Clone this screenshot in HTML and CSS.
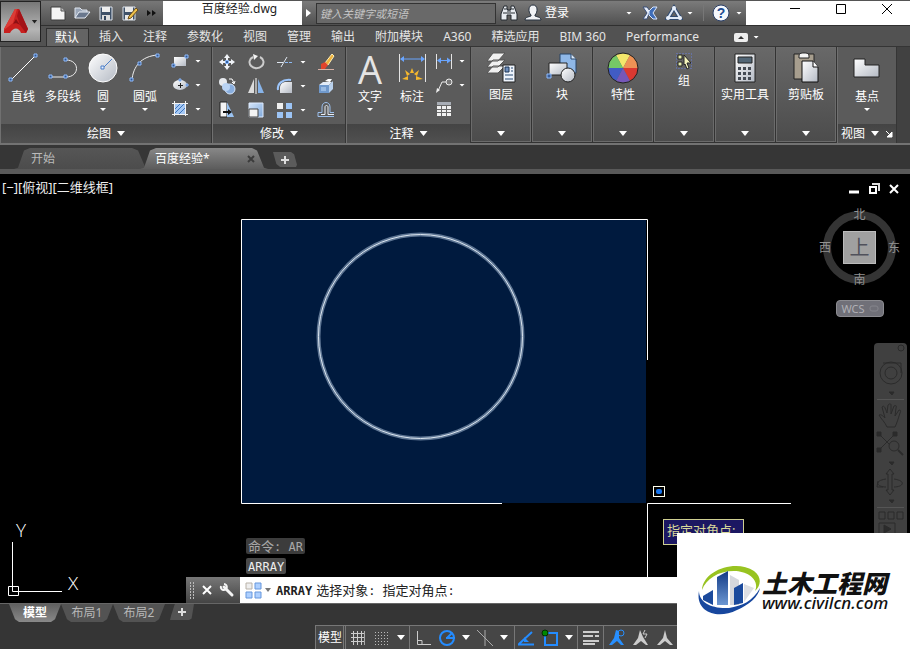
FILE: index.html
```html
<!DOCTYPE html>
<html lang="zh-CN">
<head>
<meta charset="utf-8">
<title>百度经验.dwg</title>
<link rel="stylesheet" href="styles.css">
</head>
<body>
<div class="app">
  <svg class="defs" aria-hidden="true">
    <defs>
      <linearGradient id="metal" x1="0" y1="0" x2="1" y2="1"><stop offset="0" stop-color="#fff"/><stop offset="1" stop-color="#b4bac4"/></linearGradient>
      <linearGradient id="blue" x1="0" y1="0" x2="1" y2="1"><stop offset="0" stop-color="#d5e6fa"/><stop offset="1" stop-color="#7fa8da"/></linearGradient>
      <linearGradient id="tower" x1="0" y1="0" x2="0" y2="1"><stop offset="0" stop-color="#123a86"/><stop offset="1" stop-color="#6c97d2"/></linearGradient>
    </defs>
  </svg>

  <header class="top">
    <button class="app-button" aria-label="应用程序菜单">
      <svg width="24" height="25" viewBox="0 0 24 25"><path d="M11 0h4l9 20-2 4h-5c-2-6-8-6-11 0H0v-4z" fill="#c8201f"/><path d="M11 0h2l-4 14-9 7v-1z" fill="#dc3b36"/><path d="M15 0l9 20-2 4-6-8-3-9z" fill="#a31217"/><path d="M9 15l3-5 4 6c-3-2-5-2-7-1z" fill="#8d0f14"/></svg>
      <i class="caret"></i>
    </button>
    <div class="top-rows">
      <div class="title-bar">
        <div class="quick">
          <button aria-label="新建"><svg width="18" height="18"><path d="M2 3h10l4 4v9H2z" fill="#f4f4f4" stroke="#3c3c3c"/><path d="M12 3v4h4" fill="#bbb" stroke="#555"/></svg></button>
          <button aria-label="打开"><svg width="18" height="18"><path d="M2 14V4h5l2 2h5v3" fill="#9aa6b8" stroke="#dfe5ee"/><path d="M2 14l4-6h11l-5 6z" fill="#69778d" stroke="#e8edf4"/></svg></button>
          <button aria-label="保存"><svg width="18" height="18"><path d="M3 3h12v13H3z" fill="#3f5168" stroke="#dce3ec"/><path d="M5 3h8v5H5z" fill="#eee"/><path d="M5 11h8v5H5z" fill="#ddd"/><path d="M7 12h2v4H7z" fill="#34465e"/></svg></button>
          <button aria-label="另存为"><svg width="18" height="18"><path d="M2 3h12v13H2z" fill="#3f5168" stroke="#dce3ec"/><path d="M4 3h8v5H4zM4 11h8v5H4z" fill="#e8e8e8"/><path d="M8 12l7-8 2 2-7 8-3 1z" fill="#efc24b" stroke="#6d4e1b"/></svg></button>
          <button aria-label="更多"><svg width="18" height="18"><path d="M2 6l4 3-4 3zM7 6l4 3-4 3z" fill="#111"/></svg></button>
        </div>
        <div class="doc-title">百度经验.dwg</div>
        <div class="info">
          <button class="info-toggle" aria-label="展开"><svg width="6" height="10"><path d="M0 1l5 4-5 4z" fill="#fff"/></svg></button>
          <input class="search" type="text" aria-label="搜索" placeholder="键入关键字或短语">
          <button aria-label="查找"><svg width="18" height="18"><path d="M4 2h3v3l1 1h2l1-1V2h3l3 8v6h-6v-5H7v5H1v-6z" fill="#e9edf2" stroke="#252a31"/><path d="M3 9h4M11 9h4M8 6v4M10 6v4M4 5h3M11 5h3" stroke="#252a31"/></svg></button>
          <button class="login"><svg width="18" height="18"><path d="M1 16c0-3 4-3 6-4v-1C4 8 4 1 9 1s5 7 2 10v1c2 1 6 1 6 4z" fill="#f0f2f5" stroke="#25303e"/></svg>登录</button>
          <i class="caret light push"></i>
          <button aria-label="Exchange"><svg width="18" height="18"><path d="M2 3h4l3 4-3 8H2l4-6z" fill="#e7eefb" stroke="#3b4f77"/><path d="M16 3h-4L8 7v4l4 4h4l-4-6z" fill="#3f6db8" stroke="#dbe7fb"/></svg></button>
          <button class="a360" aria-label="A360"><svg width="18" height="18"><path d="M9 4l6 10H3z" fill="none" stroke="#304a70" stroke-width="4"/><path d="M9 4l6 10H3z" fill="none" stroke="#dde8f7" stroke-width="2"/><circle cx="9" cy="4" r="2" fill="#e8f0fc"/><circle cx="3" cy="14" r="2" fill="#e8f0fc"/><circle cx="15" cy="14" r="2" fill="#e8f0fc"/></svg></button>
          <i class="caret light"></i>
          <span class="divider"></span>
          <button aria-label="帮助"><svg width="18" height="18"><circle cx="9" cy="9" r="8" fill="#f4f7fc" stroke="#2b3f66"/><text class="help-mark" x="9" y="14" text-anchor="middle">?</text></svg></button>
          <i class="caret light"></i>
        </div>
        <div class="window-controls">
          <button aria-label="最小化"><svg width="12" height="12"><path d="M1 5.500h10" stroke="#000"/></svg></button>
          <button aria-label="最大化"><svg width="12" height="12"><path d="M1.500 1.500h9v9h-9z" fill="none" stroke="#000"/></svg></button>
          <button aria-label="关闭"><svg width="12" height="12"><path d="M1 1l10 10M11 1L1 11" stroke="#000"/></svg></button>
        </div>
      </div>
      <nav class="ribbon-tabs">
        <button class="active">默认</button><button>插入</button><button>注释</button><button>参数化</button><button>视图</button><button>管理</button><button>输出</button><button>附加模块</button><button>A360</button><button>精选应用</button><button>BIM 360</button><button>Performance</button>
        <button class="minimize" aria-label="最小化功能区"><svg width="14" height="9"><rect width="14" height="9" rx="2" fill="#eee"/><path d="M4 6l3-3 3 3z" fill="#333"/></svg><i class="caret light"></i></button>
      </nav>
    </div>
  </header>

  <section class="ribbon">
    <div class="panel draw">
      <div class="tools">
        <button class="big"><svg width="32" height="32"><path d="M3.500 28.500l25-25" stroke="#fff"/><path d="M2 26h3v3H2zM27 2h3v3h-3z" fill="#31578f" stroke="#8fbcff"/></svg>直线</button>
        <button class="big"><svg width="32" height="32"><path d="M3 25h16c14 0 14-17 0-17" fill="none" stroke="#eee"/><path d="M2 23h3v3H2zM17 23h3v3h-3zM17 6h3v3h-3z" fill="#31578f" stroke="#8fbcff"/></svg>多段线</button>
        <button class="big"><svg width="32" height="32"><circle cx="16" cy="16" r="14" fill="url(#metal)" stroke="#fff"/><path d="M16 16l9-9" stroke="#4d7fc8"/><path d="M14 14h3v3h-3z" fill="#e8f2ff" stroke="#4d7fc8"/></svg>圆<i class="caret light"></i></button>
        <button class="big arc"><svg width="32" height="32"><path d="M3 28C4 15 12 4 29 3" fill="none" stroke="#eee"/><path d="M1 26h3v3H1zM9 10h3v3H9zM27 2h3v3h-3z" fill="#31578f" stroke="#8fbcff"/></svg>圆弧<i class="caret light"></i></button>
        <div class="rows">
          <button aria-label="矩形"><svg width="18" height="18"><path d="M3 5h12v9H3z" fill="url(#metal)"/><path d="M1 12h3v3H1zM14 3h3v3h-3z" fill="#31578f" stroke="#8fbcff"/></svg><i class="caret light"></i></button>
          <button aria-label="椭圆"><svg width="18" height="18"><ellipse cx="9" cy="9" rx="7" ry="5" fill="url(#metal)"/><path d="M7 9.500h5M9.500 7v5" stroke="#222"/><path d="M8 3h2v2H8zM15 8h2v2h-2z" fill="#31578f" stroke="#8fbcff"/></svg><i class="caret light"></i></button>
          <button aria-label="图案填充"><svg width="18" height="18"><path d="M4 4h10v10H4z" fill="#a6c8f3"/><path d="M4 9l5-5M4 13l9-9M8 14l6-6" stroke="#3973bd"/><path d="M3.500 1v15M14.500 1v15M1 3.500h16M1 14.500h16" stroke="#f2f2f2"/></svg><i class="caret light"></i></button>
        </div>
      </div>
      <button class="panel-title">绘图<i class="caret wide"></i></button>
    </div>

    <div class="panel modify">
      <div class="tool-grid">
        <button aria-label="移动"><svg width="18" height="18"><path d="M9 1l3 4h-2v3h3V6l4 3-4 3v-2h-3v3h2l-3 4-3-4h2v-3H5v2L1 9l4-3v2h3V5H6z" fill="#f0f3f7"/><path d="M7.500 7.500h3v3h-3z" fill="#35609c" stroke="#8fbcff"/></svg></button>
        <button aria-label="旋转"><svg width="18" height="18"><path d="M6 4a7 6 0 1 0 7 0" fill="none" stroke="#ccc" stroke-width="2"/><path d="M6 1l5 2-4 4z" fill="#f4f4f4"/></svg></button>
        <button aria-label="修剪"><svg width="18" height="18"><path d="M1 9.500h6M5 14l6-10" stroke="#dfe6ef"/><path d="M9 9.500h8" stroke="#8cb9f3" stroke-dasharray="3 1"/></svg><i class="caret light"></i></button>
        <button aria-label="删除"><svg width="18" height="18"><path d="M8 10l7-9 2 2-6 9z" fill="#efb13a" stroke="#fff1b8"/><path d="M4 11l4-2 3 3-3 4H4z" fill="#e2442c"/><path d="M1 16.500h16" stroke="#d7b0a5"/></svg></button>
        <button aria-label="复制"><svg width="18" height="18"><circle cx="5" cy="5" r="4" fill="#e6e9ee"/><circle cx="12" cy="12" r="5" fill="#88aedf" stroke="#d7e6fa"/><circle cx="8" cy="10" r="4" fill="#b9d3f4"/><path d="M11 2h3l2 4M14 5l2 2 1-3" fill="none" stroke="#fff"/></svg></button>
        <button aria-label="镜像"><svg width="18" height="18"><path d="M7 2v14H1z" fill="#ddd"/><path d="M11 2v14h6z" fill="#88b4e9"/><path d="M9 1v16" stroke="#fff"/></svg></button>
        <button aria-label="圆角"><svg width="18" height="18"><path d="M4 16v-5c0-4 3-6 6-6h6v11z" fill="url(#metal)"/><path d="M2 13C1 7 6 2 15 3" fill="none" stroke="#9cc5fb" stroke-width="2"/></svg><i class="caret light"></i></button>
        <button aria-label="分解"><svg width="18" height="18"><path d="M2 8l4-3h9l-3 3z" fill="#e2ecf8"/><path d="M2 8h10v8H2z" fill="#7099cc"/><path d="M12 8l4-4v8l-4 4z" fill="#b8d0ec"/><path d="M8 4l3-2h4l-2 3z" fill="#fff"/><path d="M4 10h5v4H4z" fill="#99bbe3"/></svg></button>
        <button aria-label="拉伸"><svg width="18" height="18"><path d="M2 1h7v15H2z" fill="#f4f4f4" stroke="#222"/><path d="M9 1l7 15H9z" fill="#9bc3f1"/><path d="M5 11h7" stroke="#111" stroke-width="2"/><path d="M10 8l4 3-4 3z" fill="#111"/></svg></button>
        <button aria-label="缩放"><svg width="18" height="18"><path d="M2 2h14v14H2z" fill="url(#blue)" stroke="#dfecff"/><path d="M2 8h9v8H2z" fill="#f4f4f4" stroke="#444"/></svg></button>
        <button aria-label="阵列"><svg width="18" height="18"><path d="M1 2h6v6H1z" fill="#eee"/><path d="M10 2h6v6h-6zM1 11h6v6H1zM10 11h6v6h-6z" fill="#9cc4f5"/></svg><i class="caret light"></i></button>
        <button aria-label="偏移"><svg width="18" height="18"><path d="M1 15.500v-4h4V6c0-6 8-6 8 0v5.500h4M1 15.500h16" fill="none" stroke="#9cbfec"/><path d="M4 13.500h4V6c0-2 3-2 3 0v7.500h6" fill="none" stroke="#e8edf4"/></svg></button>
      </div>
      <button class="panel-title">修改<i class="caret wide"></i></button>
    </div>

    <div class="panel annotate">
      <div class="tools">
        <button class="big"><span class="letter">A</span>文字<i class="caret light"></i></button>
        <button class="big"><svg width="32" height="32"><path d="M3.500 2v28M29.500 2v28" stroke="#e4e4e4"/><path d="M5 7h23" stroke="#69a5ff"/><path d="M4 7l4-3v6zM29 7l-4-3v6z" fill="#69a5ff"/><path d="M16 16l2 5h-4zM9 18l5 4-3 2zM23 18l-5 4 3 2zM6 27l6-3v4zM27 27l-7-3v4z" fill="#f6b82c"/></svg>标注</button>
        <div class="rows">
          <button aria-label="线性"><svg width="18" height="18"><path d="M1.500 2v15M16.500 2v15" stroke="#e4e4e4"/><path d="M3 8.500h12" stroke="#69a5ff"/><path d="M2 8.500l4-3v6zM16 8.500l-4-3v6z" fill="#69a5ff"/></svg><i class="caret light"></i></button>
          <button aria-label="引线"><svg width="18" height="18"><path d="M3 15l4-9h5" fill="none" stroke="#eee"/><circle cx="14" cy="6" r="3" fill="#777" stroke="#eee"/><path d="M1 17l1-5 3 2z" fill="#eee"/></svg><i class="caret light"></i></button>
          <button aria-label="表格"><svg width="18" height="18"><path d="M2 2h14v14H2z" fill="#f0f0f0"/><path d="M2 2h14v3H2z" fill="#a8adb5"/><path d="M2 5.500h14M2 9.500h14M2 12.500h14M6.500 5v11M11.500 5v11" stroke="#666"/></svg></button>
        </div>
      </div>
      <button class="panel-title">注释<i class="caret wide"></i></button>
    </div>

    <button class="card"><svg width="32" height="32"><path d="M8 1h12l-7 8H2zM8 8h12l-7 7H2zM8 14h12l-7 7H2z" fill="#f1f1f1" stroke="#555"/><path d="M18 13h12v17H18z" fill="#eef4fc" stroke="#222"/><path d="M20 15h4v5h-4z" fill="#6e8fbd" stroke="#1d3454"/><path d="M26 16h2M26 19h2M20 23h8M20 27h8" stroke="#25466f"/></svg>图层<i class="caret wide"></i></button>
    <button class="card"><svg width="32" height="32"><path d="M14 2h11l5 5v14H14z" fill="#8fb8e8" stroke="#284467"/><path d="M25 2v5h5" fill="#dce9f8" stroke="#284467"/><path d="M3 11h18v12H3z" fill="url(#metal)" stroke="#222"/><circle cx="22" cy="23" r="7" fill="url(#metal)" stroke="#222"/><path d="M1 22h4v4H1z" fill="#395d97" stroke="#8fbcff"/></svg>块<i class="caret wide"></i></button>
    <button class="card"><svg width="32" height="32"><g transform="translate(16 16)"><path d="M0 0L-7-13A15 15 0 0 1 7-13z" fill="#f4e76b"/><path d="M0 0L7-13A15 15 0 0 1 15 0z" fill="#ee9255"/><path d="M0 0H15A15 15 0 0 1 7 13z" fill="#db3931"/><path d="M0 0L7 13A15 15 0 0 1-7 13z" fill="#7657b9"/><path d="M0 0L-7 13A15 15 0 0 1-15 0z" fill="#415cc4"/><path d="M0 0H-15A15 15 0 0 1-7-13z" fill="#75c866"/><circle r="15" fill="none" stroke="#222"/></g></svg>特性<i class="caret wide"></i></button>
    <button class="card"><svg width="18" height="18"><path d="M1.500 1.500h15v15h-15z" fill="none" stroke="#667fdd" stroke-dasharray="1 2"/><path d="M3 3h4v4H3zM3 10h4v4H3z" fill="#e5edaa" stroke="#222"/><path d="M9 3l7 8h-4l2 5-2 1-2-5-1 1z" fill="#f5f5bc" stroke="#222"/></svg>组<i class="caret wide"></i></button>
    <button class="card"><svg width="32" height="32"><path d="M6 2h20v28H6z" fill="url(#metal)" stroke="#222"/><path d="M9 5h14v6H9z" fill="#526676" stroke="#222"/><path d="M9 15h3v3H9zM14 15h3v3h-3zM19 15h3v3h-3zM9 20h3v3H9zM14 20h3v3h-3zM19 20h3v3h-3zM9 25h3v3H9zM14 25h3v3h-3zM19 25h3v3h-3z" fill="#454b54"/></svg>实用工具<i class="caret wide"></i></button>
    <button class="card"><svg width="32" height="32"><path d="M4 2h20v25H4z" fill="#a79e8e" stroke="#222"/><path d="M9 4c0-3 3-3 5-3s5 0 5 3v2H9z" fill="#f5f5f5" stroke="#222"/><path d="M12 9h11l5 6v15H12z" fill="url(#metal)" stroke="#111"/><path d="M23 9v6h5" fill="#fff" stroke="#111"/></svg>剪贴板<i class="caret wide"></i></button>

    <div class="panel view">
      <div class="tools">
        <button class="big"><svg width="32" height="32"><path d="M3 7h11v6h14v12H3z" fill="url(#metal)" stroke="#222"/></svg>基点<i class="caret light"></i></button>
      </div>
      <button class="panel-title">视图<i class="caret wide"></i><svg width="8" height="8"><path d="M1 1l4 4M7 2v5H2z" fill="#fff" stroke="#fff"/></svg></button>
    </div>
    <div class="ribbon-rest"></div>
  </section>

  <nav class="file-tabs">
    <button class="file-tab">开始</button>
    <button class="file-tab active">百度经验*<svg width="8" height="8"><path d="M1 1l6 6M7 1L1 7" stroke="#3c3c3c" stroke-width="2"/></svg></button>
    <button class="add-tab" aria-label="新图形"><svg width="10" height="10"><path d="M5 1v8M1 5h8" stroke="#ddd" stroke-width="2"/></svg></button>
  </nav>

  <main class="canvas">
    <svg class="drawing" width="860" height="429">
      <rect x="242" y="46" width="404" height="283" fill="#001a3e"/>
      <path d="M502 329.500H241.500V45.500H647.500V186" fill="none" stroke="#fff"/>
      <circle cx="420.500" cy="162.500" r="102" fill="none" stroke="#5d7593" stroke-width="4"/>
      <circle cx="420.500" cy="162.500" r="102" fill="none" stroke="#dce6f0"/>
      <path d="M647.500 403v-73.500H791" fill="none" stroke="#fff"/>
      <rect x="653.500" y="312.500" width="11" height="10" fill="#000" stroke="#ffe"/><rect x="656" y="315" width="6" height="5" rx="2" fill="#1674ee"/>
      <path d="M12.500 368v49.500H62M8.500 412.500h10v9h-10z" fill="none" stroke="#fff"/>
      <text class="axis" x="21" y="363" text-anchor="middle">Y</text>
      <text class="axis" x="73" y="416" text-anchor="middle">X</text>
    </svg>
    <div class="viewport-label">[−][俯视][二维线框]</div>
    <div class="doc-controls">
      <button aria-label="最小化图形"><svg width="12" height="12"><path d="M1 9h10" stroke="#fff" stroke-width="3"/></svg></button>
      <button aria-label="还原图形"><svg width="12" height="12"><path d="M4 1h7v7" fill="none" stroke="#ddd" stroke-width="2"/><path d="M2 4h6v6H2z" fill="none" stroke="#fff" stroke-width="2"/></svg></button>
      <button aria-label="关闭图形"><svg width="12" height="12"><path d="M2 2l8 8M10 2l-8 8" stroke="#fff" stroke-width="2"/></svg></button>
    </div>
    <div class="compass">
      <span class="north">北</span><span class="west">西</span><button class="face">上</button><span class="east">东</span><span class="south">南</span>
    </div>
    <button class="wcs">WCS<svg width="10" height="8"><rect x="1" y="1" width="8" height="5" rx="2" fill="none" stroke="#85858c"/></svg></button>
    <div class="nav-bar">
      <svg width="33" height="190" fill="none" stroke="#2b2b2b">
        <circle cx="27" cy="5" r="3"/><circle cx="17" cy="30" r="11"/><circle cx="17" cy="30" r="6"/><path d="M9 20h18v10"/>
        <path d="M15 49h5l-2 3zM15 119h5l-2 3zM15 157h5l-2 3z" fill="#2b2b2b"/>
        <path d="M3 56.500h27M3 164.500h27" stroke="#555"/>
        <path d="M13 84c-2-5-6-8-8-12 2-1 4 1 6 3L8 64c2-2 3 0 5 6l1-8c2-2 3-1 3 0v9l3-8c2-1 3 0 2 2l-1 8 4-6c2 0 2 1 1 3-2 6-3 10-5 14z"/>
        <path d="M5 91l14 14M21 91L5 107"/><path d="M3 89h4v4H3zM19 89h4v4h-4zM3 105h4v4H3z" fill="#2b2b2b"/><circle cx="20" cy="103" r="5" fill="#404040"/><path d="M24 107l5 5" stroke-width="2"/>
        <path d="M14 131h-2l4-5 4 5h-2v16h2l-4 5-4-5h2z"/><path d="M12 136c-13 2-9 8 0 8M20 136c13 2 9 8 0 8M4 138l-1 6h6"/>
        <path d="M5 169h6v7H5zM14 169h6v7h-6zM23 169h6v7h-6zM5 180h16v12H5z"/><path d="M10 182l7 4-7 4z" fill="#2b2b2b"/>
      </svg>
    </div>
    <div class="prompt-tip">指定对角点:</div>
    <div class="history"><span>命令<code>: AR</code></span><span><code>ARRAY</code></span></div>
    <div class="command">
      <div class="command-tools">
        <svg width="6" height="18"><path d="M1.500 1v17M4.500 1v17" stroke="#bbb" stroke-dasharray="2 1"/></svg>
        <button aria-label="关闭命令行"><svg width="12" height="12"><path d="M2 2l8 8M10 2l-8 8" stroke="#fff" stroke-width="2"/></svg></button>
        <button aria-label="自定义"><svg width="16" height="16"><path d="M5 5l8 8" stroke="#f4f4f4" stroke-width="3" stroke-linecap="round"/><path d="M2 4a3 3 0 1 0 3-2" fill="none" stroke="#f4f4f4" stroke-width="2"/></svg></button>
      </div>
      <svg class="array-icon" width="17" height="17"><path d="M1 1h6v6H1z" fill="#eee" stroke="#b9b2a8"/><path d="M10 1h6v6h-6zM1 10h6v6H1zM10 10h6v6h-6z" fill="#aed0ff" stroke="#6797dc"/></svg>
      <i class="caret gray"></i>
      <label class="command-text" for="cmd"><code class="strong">ARRAY</code>选择对象<code>: </code>指定对角点<code>:</code></label>
      <input id="cmd" class="command-input" type="text">
    </div>
  </main>

  <footer class="bottom">
    <nav class="layout-tabs">
      <button class="active">模型</button><button>布局1</button><button>布局2</button><button class="plus" aria-label="新建布局"><svg width="10" height="10"><path d="M5 1v8M1 5h8" stroke="#ddd" stroke-width="2"/></svg></button>
    </nav>
    <div class="status">
      <div class="status-group"><button>模型</button></div>
      <div class="status-group grid-tools"><button aria-label="栅格"><svg width="18" height="18"><path d="M4.500 2v14M8.500 2v14M12.500 2v14M2 4.500h14M2 8.500h14M2 12.500h14" stroke="#ccc"/><path d="M15.500 2v14" stroke="#aaa"/></svg></button><button aria-label="捕捉"><svg width="18" height="18"><path d="M2 3.500h14M2 6.500h14M2 9.500h14M2 12.500h14M2 15.500h14" stroke="#bbb" stroke-dasharray="1 2"/></svg></button><i class="caret wide"></i></div>
      <div class="status-group angle-tools"><button aria-label="正交"><svg width="18" height="18"><path d="M3.500 2v13.500H17M3 11.500h5v4" fill="none" stroke="#ccc"/></svg></button><button aria-label="极轴"><svg width="18" height="18"><circle cx="9" cy="9" r="7" fill="none" stroke="#248cff" stroke-width="2"/><path d="M8 9h9M9 9l5-5" stroke="#248cff" stroke-width="2"/></svg></button><i class="caret wide"></i><button aria-label="等轴测"><svg width="18" height="18"><path d="M1 1l16 16M9 1v16" stroke="#aaa"/></svg></button><i class="caret wide"></i></div>
      <div class="status-group snap-tools"><button aria-label="对象追踪"><svg width="18" height="18"><path d="M1 15.500h16M2 15L15 3" stroke="#248cff" stroke-width="2"/><path d="M7 8v5h5z" fill="#248cff"/></svg></button><button aria-label="对象捕捉"><svg width="18" height="18"><path d="M4 4h12v12H4z" fill="none" stroke="#248cff" stroke-width="2"/><circle cx="4" cy="4" r="3" fill="#008800" stroke="#002c00"/></svg></button><i class="caret wide"></i></div>
      <div class="status-group"><button aria-label="线宽"><svg width="18" height="18"><path d="M1 3h16M1 7h10M13 7h4M1 12h16M1 15h12" stroke="#ccc" stroke-width="2"/></svg></button></div>
      <div class="status-group">
        <button aria-label="注释可见性"><svg width="18" height="18"><path d="M8 1l3 1v7l5 7h-3l-4-4-5 4H1l5-7z" fill="#278fff"/><circle cx="13" cy="4" r="3" fill="none" stroke="#278fff"/></svg></button>
        <button aria-label="自动缩放"><svg width="18" height="18"><path d="M8 1l3 7 5 8h-2l-5-4-5 4H1l5-7z" fill="#ccc"/><path d="M13 1l-2 4h4l-2 4" fill="none" stroke="#ccc"/></svg></button>
        <button aria-label="注释比例"><svg width="18" height="18"><path d="M9 1l2 8 6 7h-3l-5-4-5 4H1l6-7z" fill="#ccc"/></svg></button>
      </div>
    </div>
  </footer>

  <aside class="watermark">
    <svg width="64" height="54" viewBox="0 0 64 54">
      <path d="M4 26C5 6 38-5 56 7c9 7 6 16 1 20C62 16 50 7 36 7 20 7 8 15 4 26z" fill="#98c321"/>
      <path d="M1 27C-3 48 19 56 39 46c12-5 22-14 23-22-7 13-18 18-31 20C13 45 1 38 1 27z" fill="#17479e"/>
      <path d="M5 32l10-6v15L5 36z" fill="#1b4a9c"/><path d="M19 13l11-6v34H19z" fill="url(#tower)"/><path d="M32 11l9 5v25h-9z" fill="#d5d7dc"/><path d="M36 24l9-5v20l-9 2z" fill="#1b4a9c"/><path d="M46 20l10 4-10 14z" fill="#dddfe3"/>
    </svg>
    <div><strong>土木工程网</strong><span>www.civilcn.com</span></div>
  </aside>
</div>
</body>
</html>
```
FILE: styles.css
```css
* { box-sizing: border-box; }
body { margin: 0; background: #353535; color: #fff; font: 12px/16px "Noto Sans", "Noto Sans CJK SC", sans-serif; }
button { border: 0; margin: 0; padding: 0; background: none; color: inherit; font: inherit; display: flex; align-items: center; justify-content: center; flex: none; }
svg { display: block; flex: none; }
code { font: 12px/16px "DejaVu Sans Mono", monospace; }
.defs { position: absolute; width: 0; height: 0; }
.app { position: relative; display: flex; flex-direction: column; min-height: 100vh; overflow: hidden; }

.caret { flex: none; width: 6px; height: 4px; background: #222; clip-path: polygon(0 0, 100% 0, 50% 100%); }
.caret.light { width: 6px; height: 3px; background: #fff; }
.caret.wide { width: 8px; height: 5px; background: #fff; }
.caret.gray { background: #777; }

/* Title bar and ribbon tabs */
.top { display: flex; height: 46px; background: #525252; border-top: 1px solid #555; }
.app-button { width: 41px; height: 41px; gap: 4px; border: 1px solid #222; background: linear-gradient(#777, #b5b5b5 70%, #999); }
.top-rows { flex: 1; min-width: 0; }
.title-bar { display: flex; height: 24px; background: #fff; }
.quick { display: flex; align-items: center; gap: 6px; width: 122px; padding-left: 8px; background: linear-gradient(#777, #505050); }
.doc-title { flex: 1; padding-left: 14px; text-align: center; color: #222; }
.info { display: flex; align-items: center; width: 444px; padding: 0 4px; background: linear-gradient(#7b7b7b, #505050); }
.info button { margin-right: 6px; }
.info .info-toggle { margin-right: 4px; }
.search { width: 180px; height: 21px; margin-right: 4px; padding: 0 3px; border: 1px solid #333; background: #696969; color: #ddd; font: italic 11px/16px "Noto Sans", "Noto Sans CJK SC", sans-serif; }
.search::placeholder { color: #c4c4c4; opacity: 1; }
.login { gap: 3px; }
.push { margin: 0 9px 0 auto; }
.info .a360 { margin-right: 4px; }
.divider { width: 1px; height: 16px; margin: 0 8px 0 10px; background: #777; }
.window-controls { display: flex; gap: 34px; width: 164px; padding: 2px 17px 0 0; justify-content: flex-end; align-items: flex-start; }
.help-mark { font: bold 14px "Liberation Sans", sans-serif; fill: #214b91; }
.ribbon-tabs { display: flex; align-items: flex-end; height: 21px; padding-left: 5px; border-top: 1px solid #303030; color: #e4e4e4; }
.ribbon-tabs button { height: 18px; padding: 0 10px; }
.ribbon-tabs .active { padding: 0 9px 0 8px; border: 1px solid #303030; border-bottom: 0; background: #646464; color: #fff; }
.ribbon-tabs .minimize { gap: 5px; padding-left: 25px; }

/* Ribbon */
.ribbon { display: grid; grid-template-columns: 212px 134px 125px repeat(6, 61px) 60px 1fr; height: 99px; border-top: 1px solid #353535; border-bottom: 2px solid #737373; background: #333; }
.panel { display: flex; flex-direction: column; border-right: 1px solid #353535; border-left: 1px solid #707070; background: #5b5b5b; }
.tools { display: flex; flex: 1; padding-top: 5px; }
.big { flex-direction: column; justify-content: flex-start; width: 42px; white-space: nowrap; }
.draw .big { width: 40px; }
.draw .arc { width: 44px; }
.draw .tools { padding-left: 2px; }
.big svg, .letter { margin-bottom: 5px; }
.big .caret { margin-top: 3px; }
.letter { height: 32px; font: 38px/34px "Open Sans", sans-serif; color: #e4e4e4; }
.rows { display: flex; flex-direction: column; gap: 6px; padding-left: 4px; }
.rows button, .tool-grid button { gap: 6px; height: 18px; justify-content: flex-start; }
.annotate .tools { padding-left: 2px; }
.annotate .rows { padding-left: 2px; }
.tool-grid { display: grid; grid-template-columns: 29px 29px 41px 29px; gap: 6px 0; flex: 1; align-content: start; padding: 6px 0 0 5px; }
.panel-title { gap: 6px; height: 19px; background: linear-gradient(#444, #505050); }
.card { flex-direction: column; justify-content: flex-start; margin: 0 1px 1px 0; padding: 4px 0 5px; border: 1px solid #6b6b6b; background: linear-gradient(#686868, #4c4c4c); white-space: nowrap; }
.card svg { margin-bottom: 3px; }
.card .caret { margin-top: auto; }
.view .tools { justify-content: center; }
.ribbon-rest { background: #414141; }

/* Drawing tabs */
.file-tabs { display: flex; height: 29px; padding: 3px 0 0 14px; border-bottom: 5px solid #595959; background: #363636; }
.file-tab { width: 132px; height: 21px; padding-left: 17px; justify-content: flex-start; background: linear-gradient(#565656, #4c4c4c); color: #bbb; clip-path: polygon(0 100%, 4px 94%, 10px 12%, 16px 0, 118px 0, 124px 12%, 100% 100%); }
.file-tab.active { width: 128px; margin-left: -6px; padding: 0 13px 0 15px; justify-content: space-between; background: linear-gradient(#888, #5c5c5c); color: #fff; }
.file-tab.active { clip-path: polygon(0 100%, 4px 94%, 10px 12%, 16px 0, 112px 0, 117px 12%, 124px 94%, 100% 100%); }
.add-tab { width: 24px; height: 15px; margin: 4px 0 0 5px; background: #5b5b5b; clip-path: polygon(0 0, 75% 0, 88% 15%, 100% 85%, 96% 100%, 30% 100%, 14% 80%); }

/* Model space */
.canvas { position: relative; flex: 1; min-height: 429px; background: #000; }
.drawing { max-width: 100%; }
.axis { fill: #fff; font: 300 19px "Open Sans", sans-serif; }
.viewport-label { position: absolute; top: 5px; left: 2px; color: #eee; font-size: 13px; }
.doc-controls { position: absolute; top: 9px; right: 10px; display: flex; gap: 8px; }
.compass { position: absolute; top: 37px; right: 14px; display: grid; grid-template-columns: 18px 37px 18px; grid-template-rows: 18px 37px 18px; place-items: center; }
.compass::before { content: ""; position: absolute; inset: 0; border: 8px solid #343434; border-radius: 50%; }
.compass > * { position: relative; color: #929292; }
.north { grid-area: 1 / 2; align-self: start; margin-top: -4px; }
.west { grid-area: 2 / 1; justify-self: start; margin-left: -4px; }
.compass .face { grid-area: 2 / 2; width: 33px; height: 33px; border: 1px solid #bbb; background: #a0a0a0; color: #50515b; font-size: 20px; }
.east { grid-area: 2 / 3; justify-self: end; margin-right: -4px; }
.south { grid-area: 3 / 2; align-self: end; margin-bottom: -4px; }
.wcs { position: absolute; top: 126px; right: 26px; width: 48px; height: 17px; gap: 4px; border: 1px solid #8c8c91; border-radius: 4px; background: #707078; color: #b0b0b6; font-size: 11px; }
.nav-bar { position: absolute; top: 169px; right: 3px; bottom: 70px; overflow: hidden; border-radius: 4px 4px 0 0; background: #404040; }
.prompt-tip { position: absolute; top: 345px; left: 663px; height: 26px; padding: 1px 8px 0 3px; border: 1px solid #cfcf91; background: #1b1762; color: #d8d89b; font-size: 13px; line-height: 18px; }
.history { position: absolute; left: 246px; bottom: 29px; display: flex; flex-direction: column; align-items: flex-start; gap: 4px; }
.history span { height: 16px; padding: 0 2px; border-radius: 2px; background: #3c3c3c; color: #a8a8a8; font-size: 13px; line-height: 16px; white-space: pre; }
.history span + span { background: #4a4a4a; color: #eee; }
.command { position: absolute; left: 186px; right: 0; bottom: 0; display: flex; align-items: center; height: 26px; background: #fff; color: #222; }
.command-tools { display: flex; align-items: center; gap: 6px; align-self: stretch; width: 54px; padding-left: 3px; background: linear-gradient(#777, #444); }
.array-icon { margin: 0 3px 0 5px; }
.command-text { margin-left: 5px; font-size: 13px; white-space: pre; }
.strong { margin-right: 4px; font-weight: bold; }
.command-input { flex: 1; min-width: 0; height: 20px; border: 0; outline: 0; background: transparent; }

/* Layout tabs and status bar */
.bottom { display: flex; flex-direction: column; align-items: stretch; height: 46px; border-top: 1px solid #666; background: #353535; }
.layout-tabs { display: flex; height: 21px; padding-left: 9px; color: #b8b8b8; }
.layout-tabs button { width: 52px; height: 18px; background: #535353; clip-path: polygon(0 0, 100% 0, 46px 85%, 42px 100%, 10px 100%, 6px 85%); }
.layout-tabs .active { background: linear-gradient(#606060, #898989); color: #fff; font-weight: bold; }
.layout-tabs .plus { width: 24px; height: 16px; margin-left: 5px; clip-path: polygon(20% 0, 100% 0, 90% 90%, 80% 100%, 0 100%, 5% 70%); }
.status { display: flex; height: 24px; margin-left: 315px; border-top: 1px solid #777; background: #464646; }
.status-group { display: flex; align-items: center; gap: 6px; padding: 0 3px 0 4px; border-left: 1px solid #777; }
.status-group:first-child { padding: 0 1px 0 2px; border-right: 1px solid #777; margin-right: 1px; }
.grid-tools { padding: 0 4px 0 3px; }
.angle-tools { padding: 0 6px 0 4px; }
.snap-tools { padding: 0 4px 0 2px; }

/* Site mark */
.watermark { position: absolute; right: 0; bottom: 0; display: flex; align-items: center; width: 233px; height: 116px; padding-left: 21px; background: #fff; color: #111; }
.watermark strong { display: block; font: italic 900 25px/24px "Noto Sans CJK SC", sans-serif; }
.watermark span { display: block; font: italic 500 17px/18px "Noto Sans", sans-serif; }
```
